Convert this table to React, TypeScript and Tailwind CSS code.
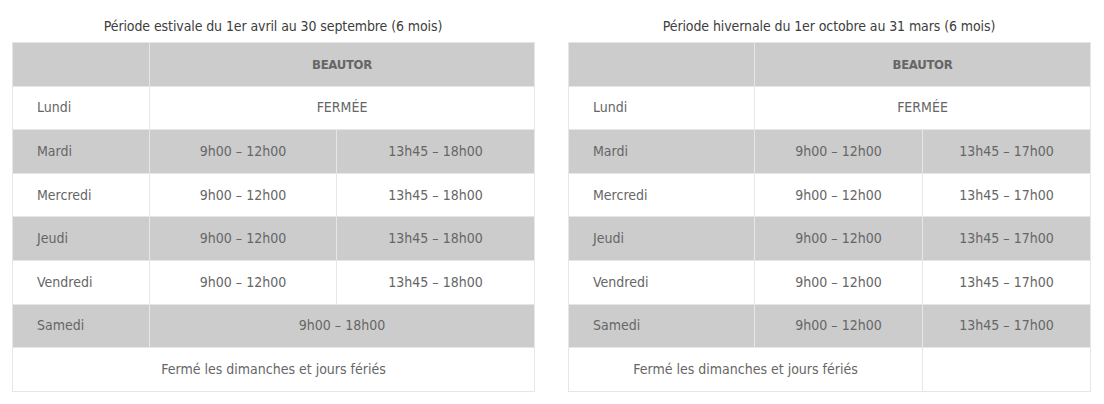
import React from "react";

type Row = { day: string; cells: string[]; shaded: boolean };

const font = {
  fontFamily: '"Liberation Sans Narrow", "DejaVu Sans Condensed", "Roboto", sans-serif',
};

const summer: Row[] = [
  { day: "Lundi", cells: ["FERMÉE"], shaded: false },
  { day: "Mardi", cells: ["9h00 – 12h00", "13h45 – 18h00"], shaded: true },
  { day: "Mercredi", cells: ["9h00 – 12h00", "13h45 – 18h00"], shaded: false },
  { day: "Jeudi", cells: ["9h00 – 12h00", "13h45 – 18h00"], shaded: true },
  { day: "Vendredi", cells: ["9h00 – 12h00", "13h45 – 18h00"], shaded: false },
  { day: "Samedi", cells: ["9h00 – 18h00"], shaded: true },
];

const winter: Row[] = [
  { day: "Lundi", cells: ["FERMÉE"], shaded: false },
  { day: "Mardi", cells: ["9h00 – 12h00", "13h45 – 17h00"], shaded: true },
  { day: "Mercredi", cells: ["9h00 – 12h00", "13h45 – 17h00"], shaded: false },
  { day: "Jeudi", cells: ["9h00 – 12h00", "13h45 – 17h00"], shaded: true },
  { day: "Vendredi", cells: ["9h00 – 12h00", "13h45 – 17h00"], shaded: false },
  { day: "Samedi", cells: ["9h00 – 12h00", "13h45 – 17h00"], shaded: true },
];

const td = "border border-[#e6e6e6] h-[43.6px] p-0 text-[14px] text-[#666]";

const Schedule = ({
  title,
  rows,
  widths,
  footerSplit,
}: {
  title: string;
  rows: Row[];
  widths: string[];
  footerSplit: boolean;
}) => (
  <div className="flex flex-col w-[522px]">
    <div className="pt-[16px] mb-[6px] leading-[20px] text-center text-[14px] tracking-[-0.1px] text-[#3d3d3d]">
      {title}
    </div>
    <table className="w-full border-collapse table-fixed">
      <colgroup>
        {widths.map((w, i) => (
          <col key={i} className={w} />
        ))}
      </colgroup>
      <tbody>
        <tr className="bg-[#cccccc]">
          <td className={td}></td>
          <td
            colSpan={2}
            className={`${td} text-center font-bold text-[#555] !text-[13px] tracking-[-0.3px]`}
          >
            BEAUTOR
          </td>
        </tr>
        {rows.map((r) => (
          <tr key={r.day} className={r.shaded ? "bg-[#cccccc]" : "bg-white"}>
            <td className={`${td} pl-[24px]`}>{r.day}</td>
            {r.cells.length === 1 ? (
              <td colSpan={2} className={`${td} text-center`}>
                {r.cells[0]}
              </td>
            ) : (
              r.cells.map((c, i) => (
                <td key={i} className={`${td} text-center`}>
                  {c}
                </td>
              ))
            )}
          </tr>
        ))}
        <tr className="bg-white">
          {footerSplit ? (
            <>
              <td colSpan={2} className={`${td} text-center`}>
                Fermé les dimanches et jours fériés
              </td>
              <td className={td}></td>
            </>
          ) : (
            <td colSpan={3} className={`${td} text-center`}>
              Fermé les dimanches et jours fériés
            </td>
          )}
        </tr>
      </tbody>
    </table>
  </div>
);

export default function App() {
  return (
    <div className="w-[1104px] h-[404px] bg-white flex pl-[12px] gap-[34px]" style={font}>
      <Schedule
        title="Période estivale du 1er avril au 30 septembre (6 mois)"
        rows={summer}
        widths={["w-[137px]", "w-[187px]", "w-[198px]"]}
        footerSplit={false}
      />
      <Schedule
        title="Période hivernale du 1er octobre au 31 mars (6 mois)"
        rows={winter}
        widths={["w-[186px]", "w-[168px]", "w-[168px]"]}
        footerSplit={true}
      />
    </div>
  );
}
